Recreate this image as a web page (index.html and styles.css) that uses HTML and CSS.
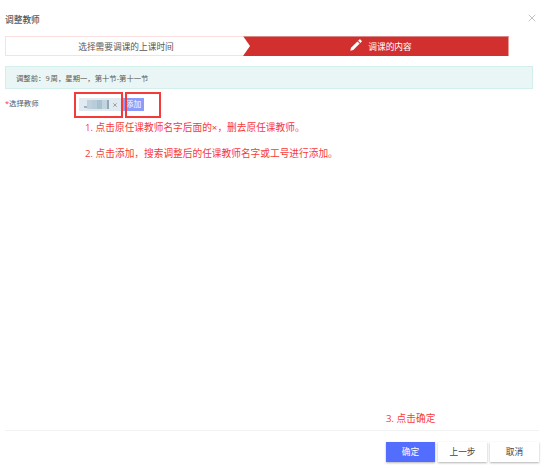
FILE: index.html
```
<!DOCTYPE html>
<html>
<head>
<meta charset="utf-8">
<title>调整教师</title>
<link rel="stylesheet" href="styles.css">
</head>
<body>
<div class="dialog">
  <header class="header">
    <h1 class="title">调整教师</h1>
    <svg class="close" viewBox="0 0 8 8"><path d="M.7.7 7.3 7.3M7.3.7.7 7.3"/></svg>
  </header>
  <div class="steps">
    <div class="step">选择需要调课的上课时间</div>
    <div class="step active">
      <svg class="pencil" viewBox="0 0 12 12"><path d="M.3 11.7 1 8.7 7.4 2.4 9.7 4.6 3.3 11ZM8.1 1.7 9.1.7Q9.9 0 10.7.7L11.4 1.4Q12.1 2.1 11.4 2.9L10.4 3.9Z"/></svg>
      <span>调课的内容</span>
    </div>
  </div>
  <div class="alert">调整前：<span class="num">9</span>周，星期一，第十节-第十一节</div>
  <main class="content">
    <div class="field">
      <label class="label"><span class="star">*</span>选择教师</label>
      <div class="tag">
        <span class="name"><i></i><i></i><i></i><i></i><i></i><i></i></span>
        <svg class="remove" viewBox="0 0 4 4"><path d="M.3.3 3.7 3.7M3.7.3.3 3.7"/></svg>
      </div>
      <button class="add">添加</button>
      <div class="mark mark-tag"></div>
      <div class="mark mark-add"></div>
    </div>
    <p class="note">1. 点击原任课教师名字后面的×，删去原任课教师。</p>
    <p class="note">2. 点击添加，搜索调整后的任课教师名字或工号进行添加。</p>
    <p class="note last">3. 点击确定</p>
  </main>
  <footer class="footer">
    <button class="btn primary">确定</button>
    <button class="btn">上一步</button>
    <button class="btn">取消</button>
  </footer>
</div>
</body>
</html>
```
FILE: styles.css
```
* { box-sizing: border-box; }
body {
  margin: 0;
  background: #fff;
  color: #585858;
  font-family: "Open Sans", "Noto Sans CJK SC", sans-serif;
  white-space: nowrap;
}
button { font-family: inherit; border: 0; padding: 0; }
.dialog {
  width: 546px;
  height: 468px;
  padding: 0 13px 0 5px;
  display: flex;
  flex-direction: column;
}
.header {
  height: 36px;
  padding: 14px 0 0;
  margin-right: -3px;
  display: flex;
  justify-content: space-between;
}
.title { margin: 0; font-size: 8.7px; line-height: 12px; font-weight: 500; }
.close { width: 8px; height: 8px; fill: none; stroke: #c4c4c4; stroke-width: 1; }
.steps {
  width: 504px;
  height: 20px;
  display: flex;
  background: #d22f2f;
}
.step {
  width: 238px;
  padding: 1px 0 0 3px;
  display: flex;
  align-items: center;
  justify-content: center;
  font-size: 8.7px;
  line-height: 18px;
  background: #fff;
  border: 1px solid #fbdfdf;
  border-right: 0;
  position: relative;
}
.step:first-child { z-index: 1; }
.step:first-child::after {
  content: "";
  position: absolute;
  left: 100%;
  top: -1px;
  width: 7px;
  height: 20px;
  background: #fff;
  clip-path: polygon(0 0, 100% 50%, 0 100%);
}
.step.active {
  width: 266px;
  padding: 0 0 0 16px;
  padding-left: 11px;
  gap: 6px;
  color: #fff;
  background: #d22f2f;
  border: 0;
  border-top: 1px solid #d98787;
  border-right: 1px solid #e79a9a;
}
.pencil { width: 12px; height: 12px; margin-top: -4px; fill: #fff; }
.alert {
  height: 23px;
  margin-top: 10px;
  padding-left: 10px;
  font-size: 7.35px;
  line-height: 22px;
  background: #eaf6f6;
  border: 1px solid #d3efeb;
}
.num { margin-right: 1px; }
.content { flex: 1; display: flex; flex-direction: column; }
.field {
  height: 32px;
  padding-top: 9px;
  display: flex;
  align-items: flex-start;
  position: relative;
}
.label { width: 74px; font-size: 7.4px; line-height: 10px; }
.star { color: #f33; }
.tag {
  width: 42px;
  height: 13px;
  padding-left: 5px;
  display: flex;
  align-items: center;
  background: #e1eaf0;
}
.name { display: flex; width: 25px; height: 9px; filter: blur(.4px); }
.name i { width: 5px; background: #b8ccda; }
.name i:nth-child(1) { width: 3px; height: 2px; margin-top: 6px; background: #9db2c1; }
.name i:nth-child(2) { background: #c0d1dc; }
.name i:nth-child(4) { background: #a9c1d1; }
.name i:nth-child(5) { background: #c3d4df; }
.name i:nth-child(6) { width: 2px; background: #8fa9ba; }
.remove { width: 4px; height: 4px; margin: 1px 0 0 4px; fill: none; stroke: #777; stroke-width: .65; }
.add {
  width: 21px;
  height: 13px;
  margin-left: 2px;
  color: #fff;
  background: #8d9bfb;
  font-size: 7.7px;
  line-height: 13px;
}
.mark { position: absolute; top: 3px; height: 26px; border: 2px solid #f43b3b; }
.mark-tag { left: 69px; width: 49px; }
.mark-add { left: 120px; width: 36px; }
.note {
  margin: 0 0 12px 80px;
  font-size: 9.7px;
  line-height: 14px;
  color: #f83939;
}
.note.last { margin: auto 0 4px 381px; }
.footer {
  height: 38px;
  padding-top: 11px;
  display: flex;
  justify-content: flex-end;
  align-items: flex-start;
  gap: 3px;
  border-top: 1px solid #f3f3f3;
  margin-right: -6px;
}
.btn {
  width: 49px;
  height: 20px;
  color: #444;
  background: #fff;
  font-size: 8.7px;
  line-height: 20px;
  box-shadow: 0 1px 2px rgba(0, 0, 0, .3);
}
.btn.primary { color: #fff; background: #536dfe; }
```
